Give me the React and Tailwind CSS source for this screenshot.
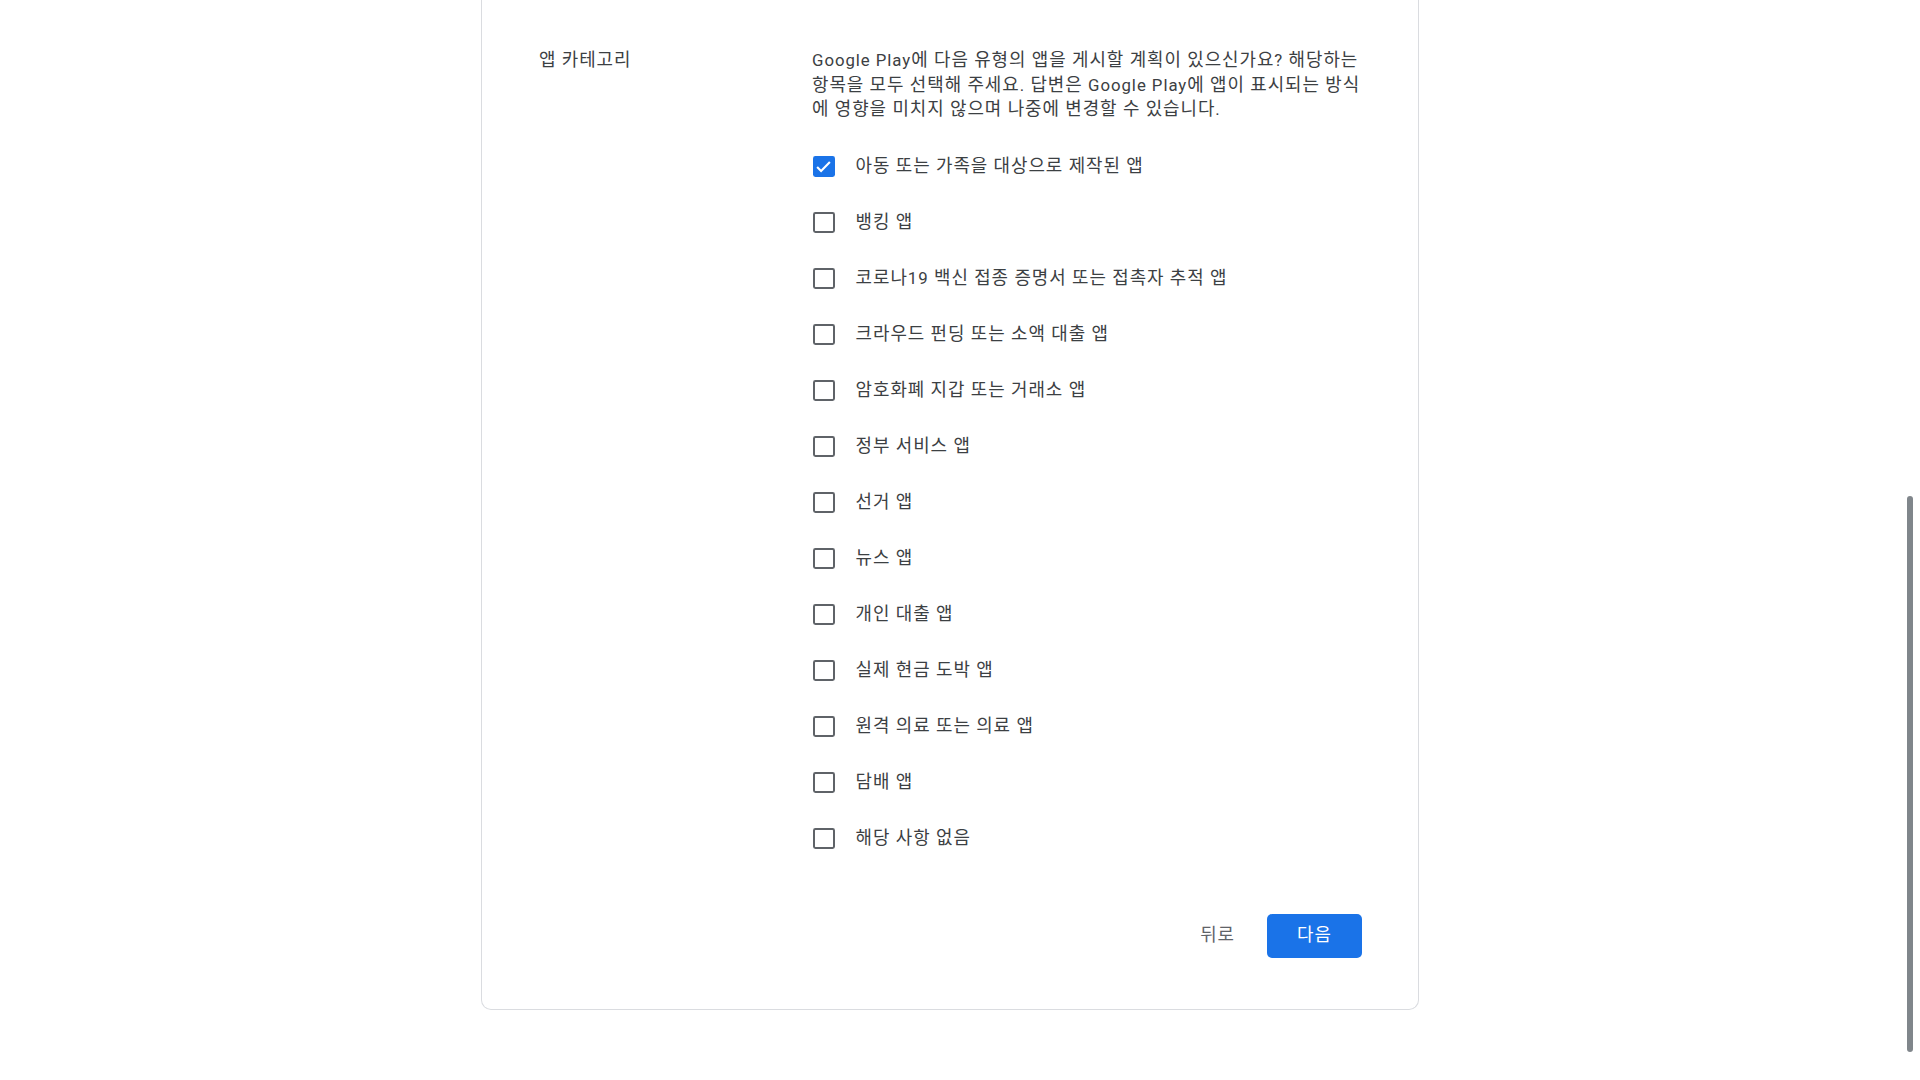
import React, { useState } from "react";

const CATEGORIES = [
  "아동 또는 가족을 대상으로 제작된 앱",
  "뱅킹 앱",
  <>
    코로나<span className="text-[16.8px]">19</span> 백신 접종 증명서 또는 접촉자 추적 앱
  </>,
  "크라우드 펀딩 또는 소액 대출 앱",
  "암호화폐 지갑 또는 거래소 앱",
  "정부 서비스 앱",
  "선거 앱",
  "뉴스 앱",
  "개인 대출 앱",
  "실제 현금 도박 앱",
  "원격 의료 또는 의료 앱",
  "담배 앱",
  "해당 사항 없음",
];

const Latin = ({ children }) => <span className="text-[16.8px]">{children}</span>;

const Checkbox = ({ checked, onToggle }) => (
  <button
    type="button"
    onClick={onToggle}
    className={
      checked
        ? "w-[21.6px] h-[21.6px] shrink-0 rounded-[2.4px] bg-[#1a73e8] flex items-center justify-center"
        : "w-[21.6px] h-[21.6px] shrink-0 rounded-[2.4px] border-[2.4px] border-[#5f6368] bg-white"
    }
  >
    {checked && (
      <svg viewBox="0 0 24 24" className="w-[17px] h-[17px]" fill="none">
        <path d="M3 12.6 L8.6 18.2 L21 5.8" stroke="white" strokeWidth="3" />
      </svg>
    )}
  </button>
);

const App = () => {
  const [selected, setSelected] = useState([0]);

  const toggle = (i) =>
    setSelected((s) => (s.includes(i) ? s.filter((x) => x !== i) : [...s, i]));

  return (
    <main className="relative min-h-screen bg-white font-[Roboto,'Noto_Sans_CJK_KR',sans-serif] text-[17.9px] leading-[24.5px] tracking-[0.95px] text-[#3c4043]">
      <div className="flex justify-center pr-[20px]">
        <div className="w-[938px] border-x border-b border-[#dadce0] rounded-b-[10px] bg-white pl-[57px] pr-[56px] pt-[48px] pb-[51px]">
          <div className="grid grid-cols-[273px_1fr]">
            {/* label column */}
            <div>앱 카테고리</div>

            {/* answers column */}
            <div>
              <p className="whitespace-nowrap">
                <Latin>Google Play</Latin>에 다음 유형의 앱을 게시할 계획이 있으신가요<Latin>?</Latin> 해당하는
                <br />
                항목을 모두 선택해 주세요<Latin>.</Latin> 답변은 <Latin>Google Play</Latin>에 앱이 표시되는 방식
                <br />
                에 영향을 미치지 않으며 나중에 변경할 수 있습니다<Latin>.</Latin>
              </p>

              <div className="mt-[17px] flex flex-col">
                {CATEGORIES.map((label, i) => (
                  <div key={i} className="h-[56px] flex items-center gap-[21px] pl-[1px]">
                    <Checkbox checked={selected.includes(i)} onToggle={() => toggle(i)} />
                    <span className="whitespace-nowrap">{label}</span>
                  </div>
                ))}
              </div>
            </div>
          </div>

          {/* footer buttons */}
          <div className="mt-[47px] flex justify-end items-center gap-[13px]">
            <button type="button" className="h-[44px] px-[19px] text-[#5f6368] rounded-[5px]">
              뒤로
            </button>
            <button type="button" className="h-[44px] w-[95px] rounded-[5px] bg-[#1a73e8] text-white">
              다음
            </button>
          </div>
        </div>
      </div>

      {/* page scrollbar thumb */}
      <div className="absolute top-[496px] left-[1907px] w-[6px] h-[556px] rounded-full bg-[#80868b]"></div>
    </main>
  );
};

export default App;
